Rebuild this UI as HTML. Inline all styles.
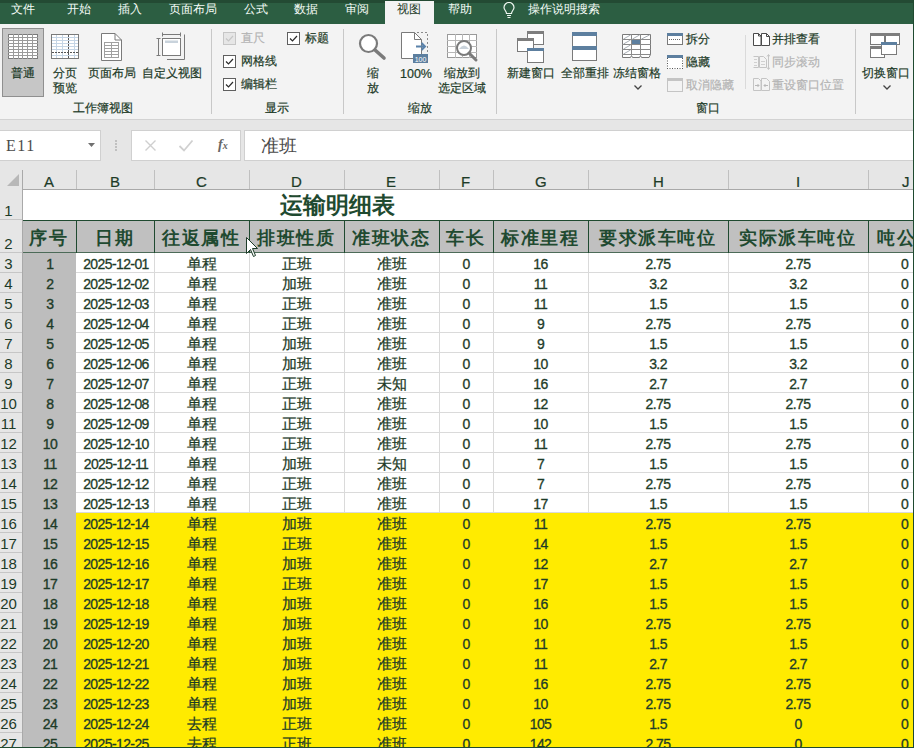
<!DOCTYPE html><html><head><meta charset="utf-8"><style>
*{margin:0;padding:0;box-sizing:border-box}
html,body{width:914px;height:748px;overflow:hidden;background:#f3f3f3;font-family:"Liberation Sans",sans-serif;color:#1d3b28}
.a{position:absolute}
.t{position:absolute;white-space:nowrap;line-height:1}
</style></head><body>

<div class="a" style="left:0;top:0;width:914px;height:24px;background:#2c5e42"></div>
<div class="a" style="left:0;top:0;width:914px;height:3px;background:#234a33"></div>
<div class="a" style="left:385px;top:1px;width:49px;height:24px;background:#f3f3f3"></div>
<div class="t" style="left:11px;top:3px;font-size:12px;color:#f4fbf6">文件</div>
<div class="t" style="left:67px;top:3px;font-size:12px;color:#f4fbf6">开始</div>
<div class="t" style="left:118px;top:3px;font-size:12px;color:#f4fbf6">插入</div>
<div class="t" style="left:169px;top:3px;font-size:12px;color:#f4fbf6">页面布局</div>
<div class="t" style="left:244px;top:3px;font-size:12px;color:#f4fbf6">公式</div>
<div class="t" style="left:294px;top:3px;font-size:12px;color:#f4fbf6">数据</div>
<div class="t" style="left:345px;top:3px;font-size:12px;color:#f4fbf6">审阅</div>
<div class="t" style="left:448px;top:3px;font-size:12px;color:#f4fbf6">帮助</div>
<div class="t" style="left:528px;top:3px;font-size:12px;color:#f4fbf6">操作说明搜索</div>
<div class="t" style="left:397px;top:3px;font-size:12px;color:#1d3b28">视图</div>
<svg class="a" style="left:502px;top:2px" width="14" height="17" viewBox="0 0 14 17"><path d="M4.5 11.5 C4.5 9 2 8 2 5.5 A5 5 0 0 1 12 5.5 C12 8 9.5 9 9.5 11.5 Z" fill="none" stroke="#eef6f0" stroke-width="1.2"/><path d="M5 13.5h4M5.5 15.5h3" stroke="#eef6f0" stroke-width="1.2"/></svg>
<div class="a" style="left:0;top:119px;width:914px;height:1px;background:#d2d2d2"></div>
<div class="a" style="left:913px;top:0;width:1px;height:748px;background:#1f4a30"></div>
<div class="a" style="left:2px;top:28px;width:42px;height:69px;background:#c6c6c6;border:1px solid #8f8f8f"></div>
<svg class="a" style="left:8px;top:34px" width="30" height="25"><rect x="0.5" y="0.5" width="29" height="24" fill="#fff" stroke="#7a7a7a"/><line x1="5.5" y1="0" x2="5.5" y2="25" stroke="#9a9a9a"/><line x1="10.5" y1="0" x2="10.5" y2="25" stroke="#9a9a9a"/><line x1="14.5" y1="0" x2="14.5" y2="25" stroke="#9a9a9a"/><line x1="19.5" y1="0" x2="19.5" y2="25" stroke="#9a9a9a"/><line x1="24.5" y1="0" x2="24.5" y2="25" stroke="#9a9a9a"/><line x1="0" y1="3.5" x2="30" y2="3.5" stroke="#9a9a9a"/><line x1="0" y1="6.5" x2="30" y2="6.5" stroke="#9a9a9a"/><line x1="0" y1="9.5" x2="30" y2="9.5" stroke="#9a9a9a"/><line x1="0" y1="12.5" x2="30" y2="12.5" stroke="#9a9a9a"/><line x1="0" y1="15.5" x2="30" y2="15.5" stroke="#9a9a9a"/><line x1="0" y1="18.5" x2="30" y2="18.5" stroke="#9a9a9a"/><line x1="0" y1="21.5" x2="30" y2="21.5" stroke="#9a9a9a"/></svg>
<div class="t" style="left:11px;top:67px;font-size:12px;-webkit-text-stroke:0.2px;">普通</div>
<svg class="a" style="left:51px;top:34px" width="28" height="25"><rect x="0.5" y="0.5" width="27" height="24" fill="#fff" stroke="#7a7a7a"/><line x1="1" y1="3.5" x2="27" y2="3.5" stroke="#c5d5e5"/><line x1="1" y1="6.5" x2="27" y2="6.5" stroke="#c5d5e5"/><line x1="1" y1="9.5" x2="27" y2="9.5" stroke="#c5d5e5"/><line x1="1" y1="12.5" x2="27" y2="12.5" stroke="#c5d5e5"/><line x1="1" y1="15.5" x2="27" y2="15.5" stroke="#c5d5e5"/><line x1="1" y1="21.5" x2="27" y2="21.5" stroke="#c5d5e5"/><line x1="5.5" y1="1" x2="5.5" y2="24" stroke="#c5d5e5"/><line x1="11.5" y1="1" x2="11.5" y2="24" stroke="#c5d5e5"/><line x1="23.5" y1="1" x2="23.5" y2="24" stroke="#c5d5e5"/><line x1="17.5" y1="1" x2="17.5" y2="24" stroke="#555" stroke-dasharray="2,1"/><line x1="1" y1="18.5" x2="27" y2="18.5" stroke="#555" stroke-dasharray="2,1"/></svg>
<div class="t" style="left:53px;top:67px;font-size:12px;-webkit-text-stroke:0.2px;">分页</div>
<div class="t" style="left:53px;top:82px;font-size:12px;-webkit-text-stroke:0.2px;">预览</div>
<svg class="a" style="left:101px;top:33px" width="22" height="28"><path d="M0.5 0.5H14L20.5 7V27.5H0.5Z" fill="#fff" stroke="#7a7a7a"/><path d="M14 0.5V7H20.5" fill="none" stroke="#7a7a7a"/><rect x="3.5" y="9.5" width="14" height="15" fill="#fff" stroke="#a0a0a0"/><line x1="3" y1="12.5" x2="18" y2="12.5" stroke="#a0a0a0"/><line x1="3" y1="15.5" x2="18" y2="15.5" stroke="#a0a0a0"/><line x1="3" y1="18.5" x2="18" y2="18.5" stroke="#a0a0a0"/><line x1="3" y1="21.5" x2="18" y2="21.5" stroke="#a0a0a0"/><line x1="10.5" y1="9" x2="10.5" y2="25" stroke="#a0a0a0"/></svg>
<div class="t" style="left:88px;top:67px;font-size:12px;-webkit-text-stroke:0.2px;">页面布局</div>
<svg class="a" style="left:155px;top:32px" width="32" height="30"><path d="M3.5 6V24M1.5 6.5H5.5M1.5 23.5H5.5" stroke="#7a7a7a"/><path d="M7 2.5H26M7.5 0.5V4.5M25.5 0.5V4.5" stroke="#7a7a7a"/><path d="M29.5 2.5V27.5H12" fill="none" stroke="#7a7a7a"/><rect x="7.5" y="6.5" width="18" height="17" fill="#fff" stroke="#7a7a7a"/><rect x="10" y="8.5" width="13" height="2.5" fill="#c9d3dc"/></svg>
<div class="t" style="left:142px;top:67px;font-size:12px;-webkit-text-stroke:0.2px;">自定义视图</div>
<div class="t" style="left:73px;top:102px;font-size:12px;-webkit-text-stroke:0.2px;">工作簿视图</div>
<div class="a" style="left:211px;top:29px;width:1px;height:85px;background:#c8c8c8"></div>
<div class="a" style="left:343px;top:29px;width:1px;height:85px;background:#c8c8c8"></div>
<div class="a" style="left:496px;top:29px;width:1px;height:85px;background:#c8c8c8"></div>
<div class="a" style="left:855px;top:29px;width:1px;height:85px;background:#c8c8c8"></div>
<div class="a" style="left:745px;top:35px;width:1px;height:54px;background:#dadada"></div>
<svg class="a" style="left:223px;top:32px" width="13" height="13"><rect x="0.5" y="0.5" width="12" height="12" fill="#e6e6e6" stroke="#c6c6c6"/><path d="M3 6.5L5.5 9L10 4" fill="none" stroke="#c6c6c6" stroke-width="1.2"/></svg>
<div class="t" style="left:241px;top:32px;font-size:12px;color:#b4b4b4;-webkit-text-stroke:0.2px;">直尺</div>
<svg class="a" style="left:287px;top:32px" width="13" height="13"><rect x="0.5" y="0.5" width="12" height="12" fill="#fff" stroke="#5f5f5f"/><path d="M3 6.5L5.5 9L10 4" fill="none" stroke="#2b2b2b" stroke-width="1.2"/></svg>
<div class="t" style="left:305px;top:32px;font-size:12px;-webkit-text-stroke:0.2px;">标题</div>
<svg class="a" style="left:223px;top:55px" width="13" height="13"><rect x="0.5" y="0.5" width="12" height="12" fill="#fff" stroke="#5f5f5f"/><path d="M3 6.5L5.5 9L10 4" fill="none" stroke="#2b2b2b" stroke-width="1.2"/></svg>
<div class="t" style="left:241px;top:55px;font-size:12px;-webkit-text-stroke:0.2px;">网格线</div>
<svg class="a" style="left:223px;top:78px" width="13" height="13"><rect x="0.5" y="0.5" width="12" height="12" fill="#fff" stroke="#5f5f5f"/><path d="M3 6.5L5.5 9L10 4" fill="none" stroke="#2b2b2b" stroke-width="1.2"/></svg>
<div class="t" style="left:241px;top:78px;font-size:12px;-webkit-text-stroke:0.2px;">编辑栏</div>
<div class="t" style="left:265px;top:102px;font-size:12px;-webkit-text-stroke:0.2px;">显示</div>
<svg class="a" style="left:358px;top:33px" width="30" height="28"><circle cx="10.5" cy="10.5" r="8.5" fill="#fff" stroke="#7a7a7a" stroke-width="2.2"/><line x1="17" y1="17" x2="26" y2="25" stroke="#7a7a7a" stroke-width="3.6" stroke-linecap="round"/></svg>
<div class="t" style="left:367px;top:67px;font-size:12px;-webkit-text-stroke:0.2px;">缩</div>
<div class="t" style="left:367px;top:82px;font-size:12px;-webkit-text-stroke:0.2px;">放</div>
<svg class="a" style="left:401px;top:32px" width="28" height="31"><path d="M0.5 0.5H13.5L20.5 7.5V26.5H0.5Z" fill="#fff" stroke="#7a7a7a"/><path d="M13.5 0.5V7.5H20.5" fill="none" stroke="#7a7a7a"/><path d="M16 0.5H26.5V22" fill="none" stroke="#8a8a8a" stroke-dasharray="2,2"/><path d="M15 14.5H24M20.5 11L24 14.5L20.5 18" fill="none" stroke="#5a82aa" stroke-width="2"/><rect x="12" y="22" width="15" height="9" fill="#5d7f9f"/><text x="19.5" y="29.5" font-size="7" fill="#fff" text-anchor="middle" font-family="Liberation Sans">100</text></svg>
<div class="t" style="left:400px;top:68px;font-size:12.5px;-webkit-text-stroke:0.2px;">100%</div>
<svg class="a" style="left:447px;top:34px" width="33" height="29"><rect x="0.5" y="0.5" width="29" height="23" fill="#fff" stroke="#9a9a9a"/><line x1="0" y1="6.5" x2="30" y2="6.5" stroke="#b8b8b8"/><line x1="0" y1="12.5" x2="30" y2="12.5" stroke="#b8b8b8"/><line x1="0" y1="18.5" x2="30" y2="18.5" stroke="#b8b8b8"/><line x1="8.5" y1="0" x2="8.5" y2="24" stroke="#b8b8b8"/><line x1="15.5" y1="0" x2="15.5" y2="24" stroke="#b8b8b8"/><line x1="22.5" y1="0" x2="22.5" y2="24" stroke="#b8b8b8"/><circle cx="17" cy="14" r="7" fill="#fff" stroke="#7a7a7a" stroke-width="2"/><path d="M12 15Q17 8 22 15Z" fill="#c9d2da"/><line x1="22" y1="19" x2="29" y2="26" stroke="#7a7a7a" stroke-width="3" stroke-linecap="round"/></svg>
<div class="t" style="left:444px;top:67px;font-size:12px;-webkit-text-stroke:0.2px;">缩放到</div>
<div class="t" style="left:438px;top:82px;font-size:12px;-webkit-text-stroke:0.2px;">选定区域</div>
<div class="t" style="left:408px;top:102px;font-size:12px;-webkit-text-stroke:0.2px;">缩放</div>
<svg class="a" style="left:517px;top:31px" width="28" height="33"><rect x="10.5" y="0.5" width="16" height="13" fill="#fff" stroke="#7a7a7a"/><rect x="10" y="0" width="17" height="3" fill="#7d7d7d"/><rect x="0.5" y="7.5" width="16" height="13" fill="#fff" stroke="#7a7a7a"/><rect x="0" y="7" width="17" height="3" fill="#7d7d7d"/><rect x="10.5" y="17.5" width="16" height="14" fill="#fff" stroke="#7a7a7a"/><rect x="10" y="17" width="17" height="3" fill="#5d7f9f"/></svg>
<div class="t" style="left:507px;top:67px;font-size:12px;-webkit-text-stroke:0.2px;">新建窗口</div>
<svg class="a" style="left:572px;top:32px" width="25" height="29"><rect x="0.5" y="0.5" width="24" height="28" fill="#fff" stroke="#7a7a7a"/><rect x="0" y="0" width="25" height="4" fill="#5d7f9f"/><rect x="0" y="14" width="25" height="4" fill="#5d7f9f"/></svg>
<div class="t" style="left:561px;top:67px;font-size:12px;-webkit-text-stroke:0.2px;">全部重排</div>
<svg class="a" style="left:622px;top:34px" width="30" height="26"><path d="M0.5 0.5H28.5V20.5L27 23.5H19.5L18.5 21.5L17.5 23.5H10.5L9.5 21.5L8.5 23.5H0.5Z" fill="#fff" stroke="#7a7a7a"/><line x1="0" y1="5.5" x2="29" y2="5.5" stroke="#8a8a8a"/><line x1="0" y1="10.5" x2="29" y2="10.5" stroke="#8a8a8a"/><line x1="0" y1="15.5" x2="29" y2="15.5" stroke="#8a8a8a"/><line x1="0" y1="20.5" x2="29" y2="20.5" stroke="#8a8a8a"/><line x1="9.5" y1="0" x2="9.5" y2="21" stroke="#8a8a8a"/><line x1="18.5" y1="0" x2="18.5" y2="21" stroke="#8a8a8a"/><rect x="10" y="6" width="8" height="4" fill="#5d7f9f"/><path d="M1.5 5L8.5 1M10.5 5L17.5 1M19.5 5L27.5 1M1.5 10L8.5 6M1.5 15L8.5 11M1.5 20L8.5 16" stroke="#a8aeb5"/></svg>
<div class="t" style="left:613px;top:67px;font-size:12px;-webkit-text-stroke:0.2px;">冻结窗格</div>
<svg class="a" style="left:634px;top:85px" width="8" height="5"><path d="M0.5 0.5L4 4L7.5 0.5" fill="none" stroke="#444" stroke-width="1.3"/></svg>
<svg class="a" style="left:667px;top:33px" width="16" height="12"><rect x="0.5" y="0.5" width="15" height="11" fill="#fff" stroke="#7a7a7a"/><rect x="0" y="0" width="16" height="3" fill="#5d7f9f"/><line x1="2" y1="6.5" x2="14" y2="6.5" stroke="#6a6a6a" stroke-dasharray="1,1"/></svg>
<div class="t" style="left:686px;top:33px;font-size:12px;-webkit-text-stroke:0.2px;">拆分</div>
<svg class="a" style="left:667px;top:55px" width="16" height="14"><rect x="0" y="0" width="16" height="14" fill="#fff"/><path d="M0.5 3V14M15.5 3V14M0 13.5H16" stroke="#555" stroke-dasharray="1,1.5"/><rect x="0" y="0" width="16" height="3" fill="#5d7f9f"/></svg>
<div class="t" style="left:686px;top:56px;font-size:12px;-webkit-text-stroke:0.2px;">隐藏</div>
<svg class="a" style="left:667px;top:78px" width="16" height="14"><rect x="0.5" y="0.5" width="15" height="13" fill="#f3f3f3" stroke="#c4c4c4"/><rect x="0" y="0" width="16" height="3" fill="#c4c4c4"/></svg>
<div class="t" style="left:686px;top:79px;font-size:12px;color:#b4b4b4;-webkit-text-stroke:0.2px;">取消隐藏</div>
<div class="t" style="left:696px;top:102px;font-size:12px;-webkit-text-stroke:0.2px;">窗口</div>
<svg class="a" style="left:753px;top:33px" width="17" height="13"><path d="M0.5 0.5H5.5L8 3V12.5H0.5Z" fill="#fff" stroke="#4a4a4a"/><path d="M8.5 0.5H13.5L16.5 3.5V12.5H8.5Z" fill="#fff" stroke="#4a4a4a"/><path d="M5.5 0.5V3H8M13.5 0.5V3.5H16.5" fill="none" stroke="#4a4a4a"/></svg>
<div class="t" style="left:772px;top:33px;font-size:12px;-webkit-text-stroke:0.2px;">并排查看</div>
<svg class="a" style="left:753px;top:54px" width="17" height="16"><path d="M0.5 2.5H5.5V13.5H0.5" fill="none" stroke="#c4c4c4"/><path d="M6.5 2.5H10.5L13.5 5.5V13.5H6.5Z" fill="none" stroke="#c4c4c4"/><path d="M8 7.5H12M8 10.5H12M1 5.5H4M1 8.5H4M1 11.5H4" stroke="#d0d0d0"/><path d="M15.5 1V15M14 2.5L15.5 0.5L17 2.5M14 13.5L15.5 15.5L17 13.5" fill="none" stroke="#c4c4c4"/></svg>
<div class="t" style="left:772px;top:56px;font-size:12px;color:#b4b4b4;-webkit-text-stroke:0.2px;">同步滚动</div>
<svg class="a" style="left:753px;top:78px" width="17" height="13"><path d="M0.5 0.5H5.5L8 3V12.5H0.5Z" fill="none" stroke="#c4c4c4"/><path d="M8.5 0.5H13.5L16.5 3.5V12.5H8.5Z" fill="none" stroke="#c4c4c4"/><path d="M2 7.5H6M4.5 6L6 7.5L4.5 9M11 7.5H15M12.5 6L11 7.5L12.5 9" fill="none" stroke="#b8b8b8"/></svg>
<div class="t" style="left:772px;top:79px;font-size:12px;color:#b4b4b4;-webkit-text-stroke:0.2px;">重设窗口位置</div>
<svg class="a" style="left:870px;top:33px" width="31" height="26"><rect x="0.5" y="0.5" width="14" height="11" fill="#fff" stroke="#7a7a7a"/><rect x="0" y="0" width="15" height="3" fill="#7d7d7d"/><rect x="15.5" y="0.5" width="14" height="11" fill="#fff" stroke="#7a7a7a"/><rect x="15" y="0" width="15" height="3" fill="#7d7d7d"/><rect x="0.5" y="13.5" width="14" height="11" fill="#fff" stroke="#7a7a7a"/><rect x="0" y="13" width="15" height="3" fill="#7d7d7d"/><rect x="11.5" y="9.5" width="15" height="12" fill="#fff" stroke="#7a7a7a"/><rect x="11" y="9" width="16" height="3" fill="#5d7f9f"/></svg>
<div class="t" style="left:862px;top:67px;font-size:12px;-webkit-text-stroke:0.2px;">切换窗口</div>
<svg class="a" style="left:883px;top:85px" width="8" height="5"><path d="M0.5 0.5L4 4L7.5 0.5" fill="none" stroke="#444" stroke-width="1.3"/></svg>
<div class="a" style="left:0;top:120px;width:913px;height:628px;background:#e6e6e6"></div>
<div class="a" style="left:0;top:130px;width:101px;height:31px;background:#fff;border:1px solid #d0d0d0;border-left:none"></div>
<div class="t" style="left:6px;top:138px;font-size:16px;color:#4a4a4a;font-family:'Liberation Serif',serif;letter-spacing:1.5px;">E11</div>
<svg class="a" style="left:88px;top:143px" width="7" height="4"><path d="M0 0H7L3.5 4Z" fill="#707070"/></svg>
<div class="a" style="left:115px;top:140px;width:2px;height:1.5px;background:#c0c0c0"></div>
<div class="a" style="left:115px;top:143px;width:2px;height:1.5px;background:#c0c0c0"></div>
<div class="a" style="left:115px;top:146px;width:2px;height:1.5px;background:#c0c0c0"></div>
<div class="a" style="left:115px;top:149px;width:2px;height:1.5px;background:#c0c0c0"></div>
<div class="a" style="left:131px;top:130px;width:110px;height:31px;background:#fff;border:1px solid #d0d0d0"></div>
<svg class="a" style="left:144px;top:139px" width="13" height="13"><path d="M1.5 1.5L11.5 11.5M11.5 1.5L1.5 11.5" stroke="#cfcfcf" stroke-width="1.4"/></svg>
<svg class="a" style="left:178px;top:139px" width="16" height="13"><path d="M1.5 7L6 11.5L14.5 1.5" fill="none" stroke="#d0d0d0" stroke-width="1.8"/></svg>
<div class="t" style="left:218px;top:138px;font-size:14px;color:#666;font-family:'Liberation Serif',serif;font-weight:bold;"><i>f<span style='font-size:10px'>x</span></i></div>
<div class="a" style="left:244px;top:130px;width:669px;height:31px;background:#fff;border:1px solid #d0d0d0;border-right:none"></div>
<div class="t" style="left:261px;top:137px;font-size:18px;color:#4a4a4a;font-family:'Liberation Serif',serif;">准班</div>
<svg class="a" style="left:7px;top:174px" width="12" height="12"><path d="M12 0V12H0Z" fill="#b8b8b8"/></svg>
<div class="a" style="left:22px;top:170px;width:1px;height:19px;background:#c0c0c0"></div>
<div class="t" style="left:44px;top:174px;font-size:15px;color:#1d3b28;-webkit-text-stroke:0.2px;">A</div>
<div class="a" style="left:76px;top:170px;width:1px;height:19px;background:#c0c0c0"></div>
<div class="t" style="left:110px;top:174px;font-size:15px;color:#1d3b28;-webkit-text-stroke:0.2px;">B</div>
<div class="a" style="left:154px;top:170px;width:1px;height:19px;background:#c0c0c0"></div>
<div class="t" style="left:196px;top:174px;font-size:15px;color:#1d3b28;-webkit-text-stroke:0.2px;">C</div>
<div class="a" style="left:249px;top:170px;width:1px;height:19px;background:#c0c0c0"></div>
<div class="t" style="left:291px;top:174px;font-size:15px;color:#1d3b28;-webkit-text-stroke:0.2px;">D</div>
<div class="a" style="left:344px;top:170px;width:1px;height:19px;background:#c0c0c0"></div>
<div class="t" style="left:386px;top:174px;font-size:15px;color:#1d3b28;-webkit-text-stroke:0.2px;">E</div>
<div class="a" style="left:439px;top:170px;width:1px;height:19px;background:#c0c0c0"></div>
<div class="t" style="left:461px;top:174px;font-size:15px;color:#1d3b28;-webkit-text-stroke:0.2px;">F</div>
<div class="a" style="left:493px;top:170px;width:1px;height:19px;background:#c0c0c0"></div>
<div class="t" style="left:535px;top:174px;font-size:15px;color:#1d3b28;-webkit-text-stroke:0.2px;">G</div>
<div class="a" style="left:588px;top:170px;width:1px;height:19px;background:#c0c0c0"></div>
<div class="t" style="left:653px;top:174px;font-size:15px;color:#1d3b28;-webkit-text-stroke:0.2px;">H</div>
<div class="a" style="left:728px;top:170px;width:1px;height:19px;background:#c0c0c0"></div>
<div class="t" style="left:796px;top:174px;font-size:15px;color:#1d3b28;-webkit-text-stroke:0.2px;">I</div>
<div class="a" style="left:868px;top:170px;width:1px;height:19px;background:#c0c0c0"></div>
<div class="t" style="left:902px;top:174px;font-size:15px;color:#1d3b28;-webkit-text-stroke:0.2px;">J</div>
<div class="a" style="left:0;top:189px;width:913px;height:1px;background:#a9a9a9"></div>
<div class="a" style="left:23px;top:190px;width:890px;height:30px;background:#fff"></div>
<div class="t" style="left:280px;top:194px;font-size:23px;color:#1f4a30;font-weight:bold;">运输明细表</div>
<div class="a" style="left:23px;top:220px;width:890px;height:33px;background:#c0c0c0"></div>
<div class="a" style="left:22px;top:220px;width:891px;height:1px;background:#1f4a30"></div>
<div class="a" style="left:22px;top:252px;width:891px;height:1px;background:#4c6b58"></div>
<div class="t" style="left:29px;top:229px;font-size:18px;letter-spacing:1.5px;font-weight:bold;color:#1f4a30;font-family:'Liberation Serif',serif">序号</div>
<div class="a" style="left:76px;top:220px;width:1px;height:33px;background:#1f4a30"></div>
<div class="t" style="left:95px;top:229px;font-size:18px;letter-spacing:1.5px;font-weight:bold;color:#1f4a30;font-family:'Liberation Serif',serif">日期</div>
<div class="a" style="left:154px;top:220px;width:1px;height:33px;background:#1f4a30"></div>
<div class="t" style="left:162px;top:229px;font-size:18px;letter-spacing:1.5px;font-weight:bold;color:#1f4a30;font-family:'Liberation Serif',serif">往返属性</div>
<div class="a" style="left:249px;top:220px;width:1px;height:33px;background:#1f4a30"></div>
<div class="t" style="left:257px;top:229px;font-size:18px;letter-spacing:1.5px;font-weight:bold;color:#1f4a30;font-family:'Liberation Serif',serif">排班性质</div>
<div class="a" style="left:344px;top:220px;width:1px;height:33px;background:#1f4a30"></div>
<div class="t" style="left:352px;top:229px;font-size:18px;letter-spacing:1.5px;font-weight:bold;color:#1f4a30;font-family:'Liberation Serif',serif">准班状态</div>
<div class="a" style="left:439px;top:220px;width:1px;height:33px;background:#1f4a30"></div>
<div class="t" style="left:446px;top:229px;font-size:18px;letter-spacing:1.5px;font-weight:bold;color:#1f4a30;font-family:'Liberation Serif',serif">车长</div>
<div class="a" style="left:493px;top:220px;width:1px;height:33px;background:#1f4a30"></div>
<div class="t" style="left:501px;top:229px;font-size:18px;letter-spacing:1.5px;font-weight:bold;color:#1f4a30;font-family:'Liberation Serif',serif">标准里程</div>
<div class="a" style="left:588px;top:220px;width:1px;height:33px;background:#1f4a30"></div>
<div class="t" style="left:599px;top:229px;font-size:18px;letter-spacing:1.5px;font-weight:bold;color:#1f4a30;font-family:'Liberation Serif',serif">要求派车吨位</div>
<div class="a" style="left:728px;top:220px;width:1px;height:33px;background:#1f4a30"></div>
<div class="t" style="left:739px;top:229px;font-size:18px;letter-spacing:1.5px;font-weight:bold;color:#1f4a30;font-family:'Liberation Serif',serif">实际派车吨位</div>
<div class="a" style="left:868px;top:220px;width:1px;height:33px;background:#1f4a30"></div>
<div class="t" style="left:877px;top:229px;font-size:18px;letter-spacing:1.5px;font-weight:bold;color:#1f4a30;font-family:'Liberation Serif',serif">吨公</div>
<div class="a" style="left:76px;top:253px;width:837px;height:20px;background:#fff"></div>
<div class="a" style="left:76px;top:272px;width:837px;height:1px;background:#dadada"></div>
<div class="a" style="left:154px;top:253px;width:1px;height:20px;background:#dadada"></div>
<div class="a" style="left:249px;top:253px;width:1px;height:20px;background:#dadada"></div>
<div class="a" style="left:344px;top:253px;width:1px;height:20px;background:#dadada"></div>
<div class="a" style="left:439px;top:253px;width:1px;height:20px;background:#dadada"></div>
<div class="a" style="left:493px;top:253px;width:1px;height:20px;background:#dadada"></div>
<div class="a" style="left:588px;top:253px;width:1px;height:20px;background:#dadada"></div>
<div class="a" style="left:728px;top:253px;width:1px;height:20px;background:#dadada"></div>
<div class="a" style="left:868px;top:253px;width:1px;height:20px;background:#dadada"></div>
<div class="a" style="left:23px;top:253px;width:53px;height:20px;background:#bdbdbd"></div>
<div class="t" style="left:23px;top:257px;width:54px;text-align:center;font-size:14px;letter-spacing:-0.5px;-webkit-text-stroke:0.35px;">1</div>
<div class="t" style="left:77px;top:257px;width:78px;text-align:center;font-size:14px;letter-spacing:-0.6px;-webkit-text-stroke:0.3px;">2025-12-01</div>
<div class="t" style="left:154px;top:256px;width:95px;text-align:center;font-size:15px;-webkit-text-stroke:0.25px;">单程</div>
<div class="t" style="left:249px;top:256px;width:95px;text-align:center;font-size:15px;-webkit-text-stroke:0.25px;">正班</div>
<div class="t" style="left:344px;top:256px;width:95px;text-align:center;font-size:15px;-webkit-text-stroke:0.25px;">准班</div>
<div class="t" style="left:439px;top:257px;width:54px;text-align:center;font-size:14px;letter-spacing:-0.6px;-webkit-text-stroke:0.3px;">0</div>
<div class="t" style="left:493px;top:257px;width:95px;text-align:center;font-size:14px;letter-spacing:-0.6px;-webkit-text-stroke:0.3px;">16</div>
<div class="t" style="left:588px;top:257px;width:140px;text-align:center;font-size:14px;letter-spacing:-0.6px;-webkit-text-stroke:0.3px;">2.75</div>
<div class="t" style="left:728px;top:257px;width:140px;text-align:center;font-size:14px;letter-spacing:-0.6px;-webkit-text-stroke:0.3px;">2.75</div>
<div class="t" style="left:901px;top:257px;font-size:14px;-webkit-text-stroke:0.3px;">0</div>
<div class="a" style="left:76px;top:273px;width:837px;height:20px;background:#fff"></div>
<div class="a" style="left:76px;top:292px;width:837px;height:1px;background:#dadada"></div>
<div class="a" style="left:154px;top:273px;width:1px;height:20px;background:#dadada"></div>
<div class="a" style="left:249px;top:273px;width:1px;height:20px;background:#dadada"></div>
<div class="a" style="left:344px;top:273px;width:1px;height:20px;background:#dadada"></div>
<div class="a" style="left:439px;top:273px;width:1px;height:20px;background:#dadada"></div>
<div class="a" style="left:493px;top:273px;width:1px;height:20px;background:#dadada"></div>
<div class="a" style="left:588px;top:273px;width:1px;height:20px;background:#dadada"></div>
<div class="a" style="left:728px;top:273px;width:1px;height:20px;background:#dadada"></div>
<div class="a" style="left:868px;top:273px;width:1px;height:20px;background:#dadada"></div>
<div class="a" style="left:23px;top:273px;width:53px;height:20px;background:#bdbdbd"></div>
<div class="t" style="left:23px;top:277px;width:54px;text-align:center;font-size:14px;letter-spacing:-0.5px;-webkit-text-stroke:0.35px;">2</div>
<div class="t" style="left:77px;top:277px;width:78px;text-align:center;font-size:14px;letter-spacing:-0.6px;-webkit-text-stroke:0.3px;">2025-12-02</div>
<div class="t" style="left:154px;top:276px;width:95px;text-align:center;font-size:15px;-webkit-text-stroke:0.25px;">单程</div>
<div class="t" style="left:249px;top:276px;width:95px;text-align:center;font-size:15px;-webkit-text-stroke:0.25px;">加班</div>
<div class="t" style="left:344px;top:276px;width:95px;text-align:center;font-size:15px;-webkit-text-stroke:0.25px;">准班</div>
<div class="t" style="left:439px;top:277px;width:54px;text-align:center;font-size:14px;letter-spacing:-0.6px;-webkit-text-stroke:0.3px;">0</div>
<div class="t" style="left:493px;top:277px;width:95px;text-align:center;font-size:14px;letter-spacing:-0.6px;-webkit-text-stroke:0.3px;">11</div>
<div class="t" style="left:588px;top:277px;width:140px;text-align:center;font-size:14px;letter-spacing:-0.6px;-webkit-text-stroke:0.3px;">3.2</div>
<div class="t" style="left:728px;top:277px;width:140px;text-align:center;font-size:14px;letter-spacing:-0.6px;-webkit-text-stroke:0.3px;">3.2</div>
<div class="t" style="left:901px;top:277px;font-size:14px;-webkit-text-stroke:0.3px;">0</div>
<div class="a" style="left:76px;top:293px;width:837px;height:20px;background:#fff"></div>
<div class="a" style="left:76px;top:312px;width:837px;height:1px;background:#dadada"></div>
<div class="a" style="left:154px;top:293px;width:1px;height:20px;background:#dadada"></div>
<div class="a" style="left:249px;top:293px;width:1px;height:20px;background:#dadada"></div>
<div class="a" style="left:344px;top:293px;width:1px;height:20px;background:#dadada"></div>
<div class="a" style="left:439px;top:293px;width:1px;height:20px;background:#dadada"></div>
<div class="a" style="left:493px;top:293px;width:1px;height:20px;background:#dadada"></div>
<div class="a" style="left:588px;top:293px;width:1px;height:20px;background:#dadada"></div>
<div class="a" style="left:728px;top:293px;width:1px;height:20px;background:#dadada"></div>
<div class="a" style="left:868px;top:293px;width:1px;height:20px;background:#dadada"></div>
<div class="a" style="left:23px;top:293px;width:53px;height:20px;background:#bdbdbd"></div>
<div class="t" style="left:23px;top:297px;width:54px;text-align:center;font-size:14px;letter-spacing:-0.5px;-webkit-text-stroke:0.35px;">3</div>
<div class="t" style="left:77px;top:297px;width:78px;text-align:center;font-size:14px;letter-spacing:-0.6px;-webkit-text-stroke:0.3px;">2025-12-03</div>
<div class="t" style="left:154px;top:296px;width:95px;text-align:center;font-size:15px;-webkit-text-stroke:0.25px;">单程</div>
<div class="t" style="left:249px;top:296px;width:95px;text-align:center;font-size:15px;-webkit-text-stroke:0.25px;">正班</div>
<div class="t" style="left:344px;top:296px;width:95px;text-align:center;font-size:15px;-webkit-text-stroke:0.25px;">准班</div>
<div class="t" style="left:439px;top:297px;width:54px;text-align:center;font-size:14px;letter-spacing:-0.6px;-webkit-text-stroke:0.3px;">0</div>
<div class="t" style="left:493px;top:297px;width:95px;text-align:center;font-size:14px;letter-spacing:-0.6px;-webkit-text-stroke:0.3px;">11</div>
<div class="t" style="left:588px;top:297px;width:140px;text-align:center;font-size:14px;letter-spacing:-0.6px;-webkit-text-stroke:0.3px;">1.5</div>
<div class="t" style="left:728px;top:297px;width:140px;text-align:center;font-size:14px;letter-spacing:-0.6px;-webkit-text-stroke:0.3px;">1.5</div>
<div class="t" style="left:901px;top:297px;font-size:14px;-webkit-text-stroke:0.3px;">0</div>
<div class="a" style="left:76px;top:313px;width:837px;height:20px;background:#fff"></div>
<div class="a" style="left:76px;top:332px;width:837px;height:1px;background:#dadada"></div>
<div class="a" style="left:154px;top:313px;width:1px;height:20px;background:#dadada"></div>
<div class="a" style="left:249px;top:313px;width:1px;height:20px;background:#dadada"></div>
<div class="a" style="left:344px;top:313px;width:1px;height:20px;background:#dadada"></div>
<div class="a" style="left:439px;top:313px;width:1px;height:20px;background:#dadada"></div>
<div class="a" style="left:493px;top:313px;width:1px;height:20px;background:#dadada"></div>
<div class="a" style="left:588px;top:313px;width:1px;height:20px;background:#dadada"></div>
<div class="a" style="left:728px;top:313px;width:1px;height:20px;background:#dadada"></div>
<div class="a" style="left:868px;top:313px;width:1px;height:20px;background:#dadada"></div>
<div class="a" style="left:23px;top:313px;width:53px;height:20px;background:#bdbdbd"></div>
<div class="t" style="left:23px;top:317px;width:54px;text-align:center;font-size:14px;letter-spacing:-0.5px;-webkit-text-stroke:0.35px;">4</div>
<div class="t" style="left:77px;top:317px;width:78px;text-align:center;font-size:14px;letter-spacing:-0.6px;-webkit-text-stroke:0.3px;">2025-12-04</div>
<div class="t" style="left:154px;top:316px;width:95px;text-align:center;font-size:15px;-webkit-text-stroke:0.25px;">单程</div>
<div class="t" style="left:249px;top:316px;width:95px;text-align:center;font-size:15px;-webkit-text-stroke:0.25px;">正班</div>
<div class="t" style="left:344px;top:316px;width:95px;text-align:center;font-size:15px;-webkit-text-stroke:0.25px;">准班</div>
<div class="t" style="left:439px;top:317px;width:54px;text-align:center;font-size:14px;letter-spacing:-0.6px;-webkit-text-stroke:0.3px;">0</div>
<div class="t" style="left:493px;top:317px;width:95px;text-align:center;font-size:14px;letter-spacing:-0.6px;-webkit-text-stroke:0.3px;">9</div>
<div class="t" style="left:588px;top:317px;width:140px;text-align:center;font-size:14px;letter-spacing:-0.6px;-webkit-text-stroke:0.3px;">2.75</div>
<div class="t" style="left:728px;top:317px;width:140px;text-align:center;font-size:14px;letter-spacing:-0.6px;-webkit-text-stroke:0.3px;">2.75</div>
<div class="t" style="left:901px;top:317px;font-size:14px;-webkit-text-stroke:0.3px;">0</div>
<div class="a" style="left:76px;top:333px;width:837px;height:20px;background:#fff"></div>
<div class="a" style="left:76px;top:352px;width:837px;height:1px;background:#dadada"></div>
<div class="a" style="left:154px;top:333px;width:1px;height:20px;background:#dadada"></div>
<div class="a" style="left:249px;top:333px;width:1px;height:20px;background:#dadada"></div>
<div class="a" style="left:344px;top:333px;width:1px;height:20px;background:#dadada"></div>
<div class="a" style="left:439px;top:333px;width:1px;height:20px;background:#dadada"></div>
<div class="a" style="left:493px;top:333px;width:1px;height:20px;background:#dadada"></div>
<div class="a" style="left:588px;top:333px;width:1px;height:20px;background:#dadada"></div>
<div class="a" style="left:728px;top:333px;width:1px;height:20px;background:#dadada"></div>
<div class="a" style="left:868px;top:333px;width:1px;height:20px;background:#dadada"></div>
<div class="a" style="left:23px;top:333px;width:53px;height:20px;background:#bdbdbd"></div>
<div class="t" style="left:23px;top:337px;width:54px;text-align:center;font-size:14px;letter-spacing:-0.5px;-webkit-text-stroke:0.35px;">5</div>
<div class="t" style="left:77px;top:337px;width:78px;text-align:center;font-size:14px;letter-spacing:-0.6px;-webkit-text-stroke:0.3px;">2025-12-05</div>
<div class="t" style="left:154px;top:336px;width:95px;text-align:center;font-size:15px;-webkit-text-stroke:0.25px;">单程</div>
<div class="t" style="left:249px;top:336px;width:95px;text-align:center;font-size:15px;-webkit-text-stroke:0.25px;">加班</div>
<div class="t" style="left:344px;top:336px;width:95px;text-align:center;font-size:15px;-webkit-text-stroke:0.25px;">准班</div>
<div class="t" style="left:439px;top:337px;width:54px;text-align:center;font-size:14px;letter-spacing:-0.6px;-webkit-text-stroke:0.3px;">0</div>
<div class="t" style="left:493px;top:337px;width:95px;text-align:center;font-size:14px;letter-spacing:-0.6px;-webkit-text-stroke:0.3px;">9</div>
<div class="t" style="left:588px;top:337px;width:140px;text-align:center;font-size:14px;letter-spacing:-0.6px;-webkit-text-stroke:0.3px;">1.5</div>
<div class="t" style="left:728px;top:337px;width:140px;text-align:center;font-size:14px;letter-spacing:-0.6px;-webkit-text-stroke:0.3px;">1.5</div>
<div class="t" style="left:901px;top:337px;font-size:14px;-webkit-text-stroke:0.3px;">0</div>
<div class="a" style="left:76px;top:353px;width:837px;height:20px;background:#fff"></div>
<div class="a" style="left:76px;top:372px;width:837px;height:1px;background:#dadada"></div>
<div class="a" style="left:154px;top:353px;width:1px;height:20px;background:#dadada"></div>
<div class="a" style="left:249px;top:353px;width:1px;height:20px;background:#dadada"></div>
<div class="a" style="left:344px;top:353px;width:1px;height:20px;background:#dadada"></div>
<div class="a" style="left:439px;top:353px;width:1px;height:20px;background:#dadada"></div>
<div class="a" style="left:493px;top:353px;width:1px;height:20px;background:#dadada"></div>
<div class="a" style="left:588px;top:353px;width:1px;height:20px;background:#dadada"></div>
<div class="a" style="left:728px;top:353px;width:1px;height:20px;background:#dadada"></div>
<div class="a" style="left:868px;top:353px;width:1px;height:20px;background:#dadada"></div>
<div class="a" style="left:23px;top:353px;width:53px;height:20px;background:#bdbdbd"></div>
<div class="t" style="left:23px;top:357px;width:54px;text-align:center;font-size:14px;letter-spacing:-0.5px;-webkit-text-stroke:0.35px;">6</div>
<div class="t" style="left:77px;top:357px;width:78px;text-align:center;font-size:14px;letter-spacing:-0.6px;-webkit-text-stroke:0.3px;">2025-12-06</div>
<div class="t" style="left:154px;top:356px;width:95px;text-align:center;font-size:15px;-webkit-text-stroke:0.25px;">单程</div>
<div class="t" style="left:249px;top:356px;width:95px;text-align:center;font-size:15px;-webkit-text-stroke:0.25px;">加班</div>
<div class="t" style="left:344px;top:356px;width:95px;text-align:center;font-size:15px;-webkit-text-stroke:0.25px;">准班</div>
<div class="t" style="left:439px;top:357px;width:54px;text-align:center;font-size:14px;letter-spacing:-0.6px;-webkit-text-stroke:0.3px;">0</div>
<div class="t" style="left:493px;top:357px;width:95px;text-align:center;font-size:14px;letter-spacing:-0.6px;-webkit-text-stroke:0.3px;">10</div>
<div class="t" style="left:588px;top:357px;width:140px;text-align:center;font-size:14px;letter-spacing:-0.6px;-webkit-text-stroke:0.3px;">3.2</div>
<div class="t" style="left:728px;top:357px;width:140px;text-align:center;font-size:14px;letter-spacing:-0.6px;-webkit-text-stroke:0.3px;">3.2</div>
<div class="t" style="left:901px;top:357px;font-size:14px;-webkit-text-stroke:0.3px;">0</div>
<div class="a" style="left:76px;top:373px;width:837px;height:20px;background:#fff"></div>
<div class="a" style="left:76px;top:392px;width:837px;height:1px;background:#dadada"></div>
<div class="a" style="left:154px;top:373px;width:1px;height:20px;background:#dadada"></div>
<div class="a" style="left:249px;top:373px;width:1px;height:20px;background:#dadada"></div>
<div class="a" style="left:344px;top:373px;width:1px;height:20px;background:#dadada"></div>
<div class="a" style="left:439px;top:373px;width:1px;height:20px;background:#dadada"></div>
<div class="a" style="left:493px;top:373px;width:1px;height:20px;background:#dadada"></div>
<div class="a" style="left:588px;top:373px;width:1px;height:20px;background:#dadada"></div>
<div class="a" style="left:728px;top:373px;width:1px;height:20px;background:#dadada"></div>
<div class="a" style="left:868px;top:373px;width:1px;height:20px;background:#dadada"></div>
<div class="a" style="left:23px;top:373px;width:53px;height:20px;background:#bdbdbd"></div>
<div class="t" style="left:23px;top:377px;width:54px;text-align:center;font-size:14px;letter-spacing:-0.5px;-webkit-text-stroke:0.35px;">7</div>
<div class="t" style="left:77px;top:377px;width:78px;text-align:center;font-size:14px;letter-spacing:-0.6px;-webkit-text-stroke:0.3px;">2025-12-07</div>
<div class="t" style="left:154px;top:376px;width:95px;text-align:center;font-size:15px;-webkit-text-stroke:0.25px;">单程</div>
<div class="t" style="left:249px;top:376px;width:95px;text-align:center;font-size:15px;-webkit-text-stroke:0.25px;">正班</div>
<div class="t" style="left:344px;top:376px;width:95px;text-align:center;font-size:15px;-webkit-text-stroke:0.25px;">未知</div>
<div class="t" style="left:439px;top:377px;width:54px;text-align:center;font-size:14px;letter-spacing:-0.6px;-webkit-text-stroke:0.3px;">0</div>
<div class="t" style="left:493px;top:377px;width:95px;text-align:center;font-size:14px;letter-spacing:-0.6px;-webkit-text-stroke:0.3px;">16</div>
<div class="t" style="left:588px;top:377px;width:140px;text-align:center;font-size:14px;letter-spacing:-0.6px;-webkit-text-stroke:0.3px;">2.7</div>
<div class="t" style="left:728px;top:377px;width:140px;text-align:center;font-size:14px;letter-spacing:-0.6px;-webkit-text-stroke:0.3px;">2.7</div>
<div class="t" style="left:901px;top:377px;font-size:14px;-webkit-text-stroke:0.3px;">0</div>
<div class="a" style="left:76px;top:393px;width:837px;height:20px;background:#fff"></div>
<div class="a" style="left:76px;top:412px;width:837px;height:1px;background:#dadada"></div>
<div class="a" style="left:154px;top:393px;width:1px;height:20px;background:#dadada"></div>
<div class="a" style="left:249px;top:393px;width:1px;height:20px;background:#dadada"></div>
<div class="a" style="left:344px;top:393px;width:1px;height:20px;background:#dadada"></div>
<div class="a" style="left:439px;top:393px;width:1px;height:20px;background:#dadada"></div>
<div class="a" style="left:493px;top:393px;width:1px;height:20px;background:#dadada"></div>
<div class="a" style="left:588px;top:393px;width:1px;height:20px;background:#dadada"></div>
<div class="a" style="left:728px;top:393px;width:1px;height:20px;background:#dadada"></div>
<div class="a" style="left:868px;top:393px;width:1px;height:20px;background:#dadada"></div>
<div class="a" style="left:23px;top:393px;width:53px;height:20px;background:#bdbdbd"></div>
<div class="t" style="left:23px;top:397px;width:54px;text-align:center;font-size:14px;letter-spacing:-0.5px;-webkit-text-stroke:0.35px;">8</div>
<div class="t" style="left:77px;top:397px;width:78px;text-align:center;font-size:14px;letter-spacing:-0.6px;-webkit-text-stroke:0.3px;">2025-12-08</div>
<div class="t" style="left:154px;top:396px;width:95px;text-align:center;font-size:15px;-webkit-text-stroke:0.25px;">单程</div>
<div class="t" style="left:249px;top:396px;width:95px;text-align:center;font-size:15px;-webkit-text-stroke:0.25px;">正班</div>
<div class="t" style="left:344px;top:396px;width:95px;text-align:center;font-size:15px;-webkit-text-stroke:0.25px;">准班</div>
<div class="t" style="left:439px;top:397px;width:54px;text-align:center;font-size:14px;letter-spacing:-0.6px;-webkit-text-stroke:0.3px;">0</div>
<div class="t" style="left:493px;top:397px;width:95px;text-align:center;font-size:14px;letter-spacing:-0.6px;-webkit-text-stroke:0.3px;">12</div>
<div class="t" style="left:588px;top:397px;width:140px;text-align:center;font-size:14px;letter-spacing:-0.6px;-webkit-text-stroke:0.3px;">2.75</div>
<div class="t" style="left:728px;top:397px;width:140px;text-align:center;font-size:14px;letter-spacing:-0.6px;-webkit-text-stroke:0.3px;">2.75</div>
<div class="t" style="left:901px;top:397px;font-size:14px;-webkit-text-stroke:0.3px;">0</div>
<div class="a" style="left:76px;top:413px;width:837px;height:20px;background:#fff"></div>
<div class="a" style="left:76px;top:432px;width:837px;height:1px;background:#dadada"></div>
<div class="a" style="left:154px;top:413px;width:1px;height:20px;background:#dadada"></div>
<div class="a" style="left:249px;top:413px;width:1px;height:20px;background:#dadada"></div>
<div class="a" style="left:344px;top:413px;width:1px;height:20px;background:#dadada"></div>
<div class="a" style="left:439px;top:413px;width:1px;height:20px;background:#dadada"></div>
<div class="a" style="left:493px;top:413px;width:1px;height:20px;background:#dadada"></div>
<div class="a" style="left:588px;top:413px;width:1px;height:20px;background:#dadada"></div>
<div class="a" style="left:728px;top:413px;width:1px;height:20px;background:#dadada"></div>
<div class="a" style="left:868px;top:413px;width:1px;height:20px;background:#dadada"></div>
<div class="a" style="left:23px;top:413px;width:53px;height:20px;background:#bdbdbd"></div>
<div class="t" style="left:23px;top:417px;width:54px;text-align:center;font-size:14px;letter-spacing:-0.5px;-webkit-text-stroke:0.35px;">9</div>
<div class="t" style="left:77px;top:417px;width:78px;text-align:center;font-size:14px;letter-spacing:-0.6px;-webkit-text-stroke:0.3px;">2025-12-09</div>
<div class="t" style="left:154px;top:416px;width:95px;text-align:center;font-size:15px;-webkit-text-stroke:0.25px;">单程</div>
<div class="t" style="left:249px;top:416px;width:95px;text-align:center;font-size:15px;-webkit-text-stroke:0.25px;">正班</div>
<div class="t" style="left:344px;top:416px;width:95px;text-align:center;font-size:15px;-webkit-text-stroke:0.25px;">准班</div>
<div class="t" style="left:439px;top:417px;width:54px;text-align:center;font-size:14px;letter-spacing:-0.6px;-webkit-text-stroke:0.3px;">0</div>
<div class="t" style="left:493px;top:417px;width:95px;text-align:center;font-size:14px;letter-spacing:-0.6px;-webkit-text-stroke:0.3px;">10</div>
<div class="t" style="left:588px;top:417px;width:140px;text-align:center;font-size:14px;letter-spacing:-0.6px;-webkit-text-stroke:0.3px;">1.5</div>
<div class="t" style="left:728px;top:417px;width:140px;text-align:center;font-size:14px;letter-spacing:-0.6px;-webkit-text-stroke:0.3px;">1.5</div>
<div class="t" style="left:901px;top:417px;font-size:14px;-webkit-text-stroke:0.3px;">0</div>
<div class="a" style="left:76px;top:433px;width:837px;height:20px;background:#fff"></div>
<div class="a" style="left:76px;top:452px;width:837px;height:1px;background:#dadada"></div>
<div class="a" style="left:154px;top:433px;width:1px;height:20px;background:#dadada"></div>
<div class="a" style="left:249px;top:433px;width:1px;height:20px;background:#dadada"></div>
<div class="a" style="left:344px;top:433px;width:1px;height:20px;background:#dadada"></div>
<div class="a" style="left:439px;top:433px;width:1px;height:20px;background:#dadada"></div>
<div class="a" style="left:493px;top:433px;width:1px;height:20px;background:#dadada"></div>
<div class="a" style="left:588px;top:433px;width:1px;height:20px;background:#dadada"></div>
<div class="a" style="left:728px;top:433px;width:1px;height:20px;background:#dadada"></div>
<div class="a" style="left:868px;top:433px;width:1px;height:20px;background:#dadada"></div>
<div class="a" style="left:23px;top:433px;width:53px;height:20px;background:#bdbdbd"></div>
<div class="t" style="left:23px;top:437px;width:54px;text-align:center;font-size:14px;letter-spacing:-0.5px;-webkit-text-stroke:0.35px;">10</div>
<div class="t" style="left:77px;top:437px;width:78px;text-align:center;font-size:14px;letter-spacing:-0.6px;-webkit-text-stroke:0.3px;">2025-12-10</div>
<div class="t" style="left:154px;top:436px;width:95px;text-align:center;font-size:15px;-webkit-text-stroke:0.25px;">单程</div>
<div class="t" style="left:249px;top:436px;width:95px;text-align:center;font-size:15px;-webkit-text-stroke:0.25px;">正班</div>
<div class="t" style="left:344px;top:436px;width:95px;text-align:center;font-size:15px;-webkit-text-stroke:0.25px;">准班</div>
<div class="t" style="left:439px;top:437px;width:54px;text-align:center;font-size:14px;letter-spacing:-0.6px;-webkit-text-stroke:0.3px;">0</div>
<div class="t" style="left:493px;top:437px;width:95px;text-align:center;font-size:14px;letter-spacing:-0.6px;-webkit-text-stroke:0.3px;">11</div>
<div class="t" style="left:588px;top:437px;width:140px;text-align:center;font-size:14px;letter-spacing:-0.6px;-webkit-text-stroke:0.3px;">2.75</div>
<div class="t" style="left:728px;top:437px;width:140px;text-align:center;font-size:14px;letter-spacing:-0.6px;-webkit-text-stroke:0.3px;">2.75</div>
<div class="t" style="left:901px;top:437px;font-size:14px;-webkit-text-stroke:0.3px;">0</div>
<div class="a" style="left:76px;top:453px;width:837px;height:20px;background:#fff"></div>
<div class="a" style="left:76px;top:472px;width:837px;height:1px;background:#dadada"></div>
<div class="a" style="left:154px;top:453px;width:1px;height:20px;background:#dadada"></div>
<div class="a" style="left:249px;top:453px;width:1px;height:20px;background:#dadada"></div>
<div class="a" style="left:344px;top:453px;width:1px;height:20px;background:#dadada"></div>
<div class="a" style="left:439px;top:453px;width:1px;height:20px;background:#dadada"></div>
<div class="a" style="left:493px;top:453px;width:1px;height:20px;background:#dadada"></div>
<div class="a" style="left:588px;top:453px;width:1px;height:20px;background:#dadada"></div>
<div class="a" style="left:728px;top:453px;width:1px;height:20px;background:#dadada"></div>
<div class="a" style="left:868px;top:453px;width:1px;height:20px;background:#dadada"></div>
<div class="a" style="left:23px;top:453px;width:53px;height:20px;background:#bdbdbd"></div>
<div class="t" style="left:23px;top:457px;width:54px;text-align:center;font-size:14px;letter-spacing:-0.5px;-webkit-text-stroke:0.35px;">11</div>
<div class="t" style="left:77px;top:457px;width:78px;text-align:center;font-size:14px;letter-spacing:-0.6px;-webkit-text-stroke:0.3px;">2025-12-11</div>
<div class="t" style="left:154px;top:456px;width:95px;text-align:center;font-size:15px;-webkit-text-stroke:0.25px;">单程</div>
<div class="t" style="left:249px;top:456px;width:95px;text-align:center;font-size:15px;-webkit-text-stroke:0.25px;">加班</div>
<div class="t" style="left:344px;top:456px;width:95px;text-align:center;font-size:15px;-webkit-text-stroke:0.25px;">未知</div>
<div class="t" style="left:439px;top:457px;width:54px;text-align:center;font-size:14px;letter-spacing:-0.6px;-webkit-text-stroke:0.3px;">0</div>
<div class="t" style="left:493px;top:457px;width:95px;text-align:center;font-size:14px;letter-spacing:-0.6px;-webkit-text-stroke:0.3px;">7</div>
<div class="t" style="left:588px;top:457px;width:140px;text-align:center;font-size:14px;letter-spacing:-0.6px;-webkit-text-stroke:0.3px;">1.5</div>
<div class="t" style="left:728px;top:457px;width:140px;text-align:center;font-size:14px;letter-spacing:-0.6px;-webkit-text-stroke:0.3px;">1.5</div>
<div class="t" style="left:901px;top:457px;font-size:14px;-webkit-text-stroke:0.3px;">0</div>
<div class="a" style="left:76px;top:473px;width:837px;height:20px;background:#fff"></div>
<div class="a" style="left:76px;top:492px;width:837px;height:1px;background:#dadada"></div>
<div class="a" style="left:154px;top:473px;width:1px;height:20px;background:#dadada"></div>
<div class="a" style="left:249px;top:473px;width:1px;height:20px;background:#dadada"></div>
<div class="a" style="left:344px;top:473px;width:1px;height:20px;background:#dadada"></div>
<div class="a" style="left:439px;top:473px;width:1px;height:20px;background:#dadada"></div>
<div class="a" style="left:493px;top:473px;width:1px;height:20px;background:#dadada"></div>
<div class="a" style="left:588px;top:473px;width:1px;height:20px;background:#dadada"></div>
<div class="a" style="left:728px;top:473px;width:1px;height:20px;background:#dadada"></div>
<div class="a" style="left:868px;top:473px;width:1px;height:20px;background:#dadada"></div>
<div class="a" style="left:23px;top:473px;width:53px;height:20px;background:#bdbdbd"></div>
<div class="t" style="left:23px;top:477px;width:54px;text-align:center;font-size:14px;letter-spacing:-0.5px;-webkit-text-stroke:0.35px;">12</div>
<div class="t" style="left:77px;top:477px;width:78px;text-align:center;font-size:14px;letter-spacing:-0.6px;-webkit-text-stroke:0.3px;">2025-12-12</div>
<div class="t" style="left:154px;top:476px;width:95px;text-align:center;font-size:15px;-webkit-text-stroke:0.25px;">单程</div>
<div class="t" style="left:249px;top:476px;width:95px;text-align:center;font-size:15px;-webkit-text-stroke:0.25px;">正班</div>
<div class="t" style="left:344px;top:476px;width:95px;text-align:center;font-size:15px;-webkit-text-stroke:0.25px;">准班</div>
<div class="t" style="left:439px;top:477px;width:54px;text-align:center;font-size:14px;letter-spacing:-0.6px;-webkit-text-stroke:0.3px;">0</div>
<div class="t" style="left:493px;top:477px;width:95px;text-align:center;font-size:14px;letter-spacing:-0.6px;-webkit-text-stroke:0.3px;">7</div>
<div class="t" style="left:588px;top:477px;width:140px;text-align:center;font-size:14px;letter-spacing:-0.6px;-webkit-text-stroke:0.3px;">2.75</div>
<div class="t" style="left:728px;top:477px;width:140px;text-align:center;font-size:14px;letter-spacing:-0.6px;-webkit-text-stroke:0.3px;">2.75</div>
<div class="t" style="left:901px;top:477px;font-size:14px;-webkit-text-stroke:0.3px;">0</div>
<div class="a" style="left:76px;top:493px;width:837px;height:20px;background:#fff"></div>
<div class="a" style="left:76px;top:512px;width:837px;height:1px;background:#dadada"></div>
<div class="a" style="left:154px;top:493px;width:1px;height:20px;background:#dadada"></div>
<div class="a" style="left:249px;top:493px;width:1px;height:20px;background:#dadada"></div>
<div class="a" style="left:344px;top:493px;width:1px;height:20px;background:#dadada"></div>
<div class="a" style="left:439px;top:493px;width:1px;height:20px;background:#dadada"></div>
<div class="a" style="left:493px;top:493px;width:1px;height:20px;background:#dadada"></div>
<div class="a" style="left:588px;top:493px;width:1px;height:20px;background:#dadada"></div>
<div class="a" style="left:728px;top:493px;width:1px;height:20px;background:#dadada"></div>
<div class="a" style="left:868px;top:493px;width:1px;height:20px;background:#dadada"></div>
<div class="a" style="left:23px;top:493px;width:53px;height:20px;background:#bdbdbd"></div>
<div class="t" style="left:23px;top:497px;width:54px;text-align:center;font-size:14px;letter-spacing:-0.5px;-webkit-text-stroke:0.35px;">13</div>
<div class="t" style="left:77px;top:497px;width:78px;text-align:center;font-size:14px;letter-spacing:-0.6px;-webkit-text-stroke:0.3px;">2025-12-13</div>
<div class="t" style="left:154px;top:496px;width:95px;text-align:center;font-size:15px;-webkit-text-stroke:0.25px;">单程</div>
<div class="t" style="left:249px;top:496px;width:95px;text-align:center;font-size:15px;-webkit-text-stroke:0.25px;">正班</div>
<div class="t" style="left:344px;top:496px;width:95px;text-align:center;font-size:15px;-webkit-text-stroke:0.25px;">准班</div>
<div class="t" style="left:439px;top:497px;width:54px;text-align:center;font-size:14px;letter-spacing:-0.6px;-webkit-text-stroke:0.3px;">0</div>
<div class="t" style="left:493px;top:497px;width:95px;text-align:center;font-size:14px;letter-spacing:-0.6px;-webkit-text-stroke:0.3px;">17</div>
<div class="t" style="left:588px;top:497px;width:140px;text-align:center;font-size:14px;letter-spacing:-0.6px;-webkit-text-stroke:0.3px;">1.5</div>
<div class="t" style="left:728px;top:497px;width:140px;text-align:center;font-size:14px;letter-spacing:-0.6px;-webkit-text-stroke:0.3px;">1.5</div>
<div class="t" style="left:901px;top:497px;font-size:14px;-webkit-text-stroke:0.3px;">0</div>
<div class="a" style="left:76px;top:513px;width:837px;height:20px;background:#ffeb00"></div>
<div class="a" style="left:23px;top:513px;width:53px;height:20px;background:#bdbdbd"></div>
<div class="t" style="left:23px;top:517px;width:54px;text-align:center;font-size:14px;letter-spacing:-0.5px;-webkit-text-stroke:0.35px;">14</div>
<div class="t" style="left:77px;top:517px;width:78px;text-align:center;font-size:14px;letter-spacing:-0.6px;-webkit-text-stroke:0.3px;">2025-12-14</div>
<div class="t" style="left:154px;top:516px;width:95px;text-align:center;font-size:15px;-webkit-text-stroke:0.25px;">单程</div>
<div class="t" style="left:249px;top:516px;width:95px;text-align:center;font-size:15px;-webkit-text-stroke:0.25px;">加班</div>
<div class="t" style="left:344px;top:516px;width:95px;text-align:center;font-size:15px;-webkit-text-stroke:0.25px;">准班</div>
<div class="t" style="left:439px;top:517px;width:54px;text-align:center;font-size:14px;letter-spacing:-0.6px;-webkit-text-stroke:0.3px;">0</div>
<div class="t" style="left:493px;top:517px;width:95px;text-align:center;font-size:14px;letter-spacing:-0.6px;-webkit-text-stroke:0.3px;">11</div>
<div class="t" style="left:588px;top:517px;width:140px;text-align:center;font-size:14px;letter-spacing:-0.6px;-webkit-text-stroke:0.3px;">2.75</div>
<div class="t" style="left:728px;top:517px;width:140px;text-align:center;font-size:14px;letter-spacing:-0.6px;-webkit-text-stroke:0.3px;">2.75</div>
<div class="t" style="left:901px;top:517px;font-size:14px;-webkit-text-stroke:0.3px;">0</div>
<div class="a" style="left:76px;top:533px;width:837px;height:20px;background:#ffeb00"></div>
<div class="a" style="left:23px;top:533px;width:53px;height:20px;background:#bdbdbd"></div>
<div class="t" style="left:23px;top:537px;width:54px;text-align:center;font-size:14px;letter-spacing:-0.5px;-webkit-text-stroke:0.35px;">15</div>
<div class="t" style="left:77px;top:537px;width:78px;text-align:center;font-size:14px;letter-spacing:-0.6px;-webkit-text-stroke:0.3px;">2025-12-15</div>
<div class="t" style="left:154px;top:536px;width:95px;text-align:center;font-size:15px;-webkit-text-stroke:0.25px;">单程</div>
<div class="t" style="left:249px;top:536px;width:95px;text-align:center;font-size:15px;-webkit-text-stroke:0.25px;">正班</div>
<div class="t" style="left:344px;top:536px;width:95px;text-align:center;font-size:15px;-webkit-text-stroke:0.25px;">准班</div>
<div class="t" style="left:439px;top:537px;width:54px;text-align:center;font-size:14px;letter-spacing:-0.6px;-webkit-text-stroke:0.3px;">0</div>
<div class="t" style="left:493px;top:537px;width:95px;text-align:center;font-size:14px;letter-spacing:-0.6px;-webkit-text-stroke:0.3px;">14</div>
<div class="t" style="left:588px;top:537px;width:140px;text-align:center;font-size:14px;letter-spacing:-0.6px;-webkit-text-stroke:0.3px;">1.5</div>
<div class="t" style="left:728px;top:537px;width:140px;text-align:center;font-size:14px;letter-spacing:-0.6px;-webkit-text-stroke:0.3px;">1.5</div>
<div class="t" style="left:901px;top:537px;font-size:14px;-webkit-text-stroke:0.3px;">0</div>
<div class="a" style="left:76px;top:553px;width:837px;height:20px;background:#ffeb00"></div>
<div class="a" style="left:23px;top:553px;width:53px;height:20px;background:#bdbdbd"></div>
<div class="t" style="left:23px;top:557px;width:54px;text-align:center;font-size:14px;letter-spacing:-0.5px;-webkit-text-stroke:0.35px;">16</div>
<div class="t" style="left:77px;top:557px;width:78px;text-align:center;font-size:14px;letter-spacing:-0.6px;-webkit-text-stroke:0.3px;">2025-12-16</div>
<div class="t" style="left:154px;top:556px;width:95px;text-align:center;font-size:15px;-webkit-text-stroke:0.25px;">单程</div>
<div class="t" style="left:249px;top:556px;width:95px;text-align:center;font-size:15px;-webkit-text-stroke:0.25px;">加班</div>
<div class="t" style="left:344px;top:556px;width:95px;text-align:center;font-size:15px;-webkit-text-stroke:0.25px;">准班</div>
<div class="t" style="left:439px;top:557px;width:54px;text-align:center;font-size:14px;letter-spacing:-0.6px;-webkit-text-stroke:0.3px;">0</div>
<div class="t" style="left:493px;top:557px;width:95px;text-align:center;font-size:14px;letter-spacing:-0.6px;-webkit-text-stroke:0.3px;">12</div>
<div class="t" style="left:588px;top:557px;width:140px;text-align:center;font-size:14px;letter-spacing:-0.6px;-webkit-text-stroke:0.3px;">2.7</div>
<div class="t" style="left:728px;top:557px;width:140px;text-align:center;font-size:14px;letter-spacing:-0.6px;-webkit-text-stroke:0.3px;">2.7</div>
<div class="t" style="left:901px;top:557px;font-size:14px;-webkit-text-stroke:0.3px;">0</div>
<div class="a" style="left:76px;top:573px;width:837px;height:20px;background:#ffeb00"></div>
<div class="a" style="left:23px;top:573px;width:53px;height:20px;background:#bdbdbd"></div>
<div class="t" style="left:23px;top:577px;width:54px;text-align:center;font-size:14px;letter-spacing:-0.5px;-webkit-text-stroke:0.35px;">17</div>
<div class="t" style="left:77px;top:577px;width:78px;text-align:center;font-size:14px;letter-spacing:-0.6px;-webkit-text-stroke:0.3px;">2025-12-17</div>
<div class="t" style="left:154px;top:576px;width:95px;text-align:center;font-size:15px;-webkit-text-stroke:0.25px;">单程</div>
<div class="t" style="left:249px;top:576px;width:95px;text-align:center;font-size:15px;-webkit-text-stroke:0.25px;">正班</div>
<div class="t" style="left:344px;top:576px;width:95px;text-align:center;font-size:15px;-webkit-text-stroke:0.25px;">准班</div>
<div class="t" style="left:439px;top:577px;width:54px;text-align:center;font-size:14px;letter-spacing:-0.6px;-webkit-text-stroke:0.3px;">0</div>
<div class="t" style="left:493px;top:577px;width:95px;text-align:center;font-size:14px;letter-spacing:-0.6px;-webkit-text-stroke:0.3px;">17</div>
<div class="t" style="left:588px;top:577px;width:140px;text-align:center;font-size:14px;letter-spacing:-0.6px;-webkit-text-stroke:0.3px;">1.5</div>
<div class="t" style="left:728px;top:577px;width:140px;text-align:center;font-size:14px;letter-spacing:-0.6px;-webkit-text-stroke:0.3px;">1.5</div>
<div class="t" style="left:901px;top:577px;font-size:14px;-webkit-text-stroke:0.3px;">0</div>
<div class="a" style="left:76px;top:593px;width:837px;height:20px;background:#ffeb00"></div>
<div class="a" style="left:23px;top:593px;width:53px;height:20px;background:#bdbdbd"></div>
<div class="t" style="left:23px;top:597px;width:54px;text-align:center;font-size:14px;letter-spacing:-0.5px;-webkit-text-stroke:0.35px;">18</div>
<div class="t" style="left:77px;top:597px;width:78px;text-align:center;font-size:14px;letter-spacing:-0.6px;-webkit-text-stroke:0.3px;">2025-12-18</div>
<div class="t" style="left:154px;top:596px;width:95px;text-align:center;font-size:15px;-webkit-text-stroke:0.25px;">单程</div>
<div class="t" style="left:249px;top:596px;width:95px;text-align:center;font-size:15px;-webkit-text-stroke:0.25px;">加班</div>
<div class="t" style="left:344px;top:596px;width:95px;text-align:center;font-size:15px;-webkit-text-stroke:0.25px;">准班</div>
<div class="t" style="left:439px;top:597px;width:54px;text-align:center;font-size:14px;letter-spacing:-0.6px;-webkit-text-stroke:0.3px;">0</div>
<div class="t" style="left:493px;top:597px;width:95px;text-align:center;font-size:14px;letter-spacing:-0.6px;-webkit-text-stroke:0.3px;">16</div>
<div class="t" style="left:588px;top:597px;width:140px;text-align:center;font-size:14px;letter-spacing:-0.6px;-webkit-text-stroke:0.3px;">1.5</div>
<div class="t" style="left:728px;top:597px;width:140px;text-align:center;font-size:14px;letter-spacing:-0.6px;-webkit-text-stroke:0.3px;">1.5</div>
<div class="t" style="left:901px;top:597px;font-size:14px;-webkit-text-stroke:0.3px;">0</div>
<div class="a" style="left:76px;top:613px;width:837px;height:20px;background:#ffeb00"></div>
<div class="a" style="left:23px;top:613px;width:53px;height:20px;background:#bdbdbd"></div>
<div class="t" style="left:23px;top:617px;width:54px;text-align:center;font-size:14px;letter-spacing:-0.5px;-webkit-text-stroke:0.35px;">19</div>
<div class="t" style="left:77px;top:617px;width:78px;text-align:center;font-size:14px;letter-spacing:-0.6px;-webkit-text-stroke:0.3px;">2025-12-19</div>
<div class="t" style="left:154px;top:616px;width:95px;text-align:center;font-size:15px;-webkit-text-stroke:0.25px;">单程</div>
<div class="t" style="left:249px;top:616px;width:95px;text-align:center;font-size:15px;-webkit-text-stroke:0.25px;">加班</div>
<div class="t" style="left:344px;top:616px;width:95px;text-align:center;font-size:15px;-webkit-text-stroke:0.25px;">准班</div>
<div class="t" style="left:439px;top:617px;width:54px;text-align:center;font-size:14px;letter-spacing:-0.6px;-webkit-text-stroke:0.3px;">0</div>
<div class="t" style="left:493px;top:617px;width:95px;text-align:center;font-size:14px;letter-spacing:-0.6px;-webkit-text-stroke:0.3px;">10</div>
<div class="t" style="left:588px;top:617px;width:140px;text-align:center;font-size:14px;letter-spacing:-0.6px;-webkit-text-stroke:0.3px;">2.75</div>
<div class="t" style="left:728px;top:617px;width:140px;text-align:center;font-size:14px;letter-spacing:-0.6px;-webkit-text-stroke:0.3px;">2.75</div>
<div class="t" style="left:901px;top:617px;font-size:14px;-webkit-text-stroke:0.3px;">0</div>
<div class="a" style="left:76px;top:633px;width:837px;height:20px;background:#ffeb00"></div>
<div class="a" style="left:23px;top:633px;width:53px;height:20px;background:#bdbdbd"></div>
<div class="t" style="left:23px;top:637px;width:54px;text-align:center;font-size:14px;letter-spacing:-0.5px;-webkit-text-stroke:0.35px;">20</div>
<div class="t" style="left:77px;top:637px;width:78px;text-align:center;font-size:14px;letter-spacing:-0.6px;-webkit-text-stroke:0.3px;">2025-12-20</div>
<div class="t" style="left:154px;top:636px;width:95px;text-align:center;font-size:15px;-webkit-text-stroke:0.25px;">单程</div>
<div class="t" style="left:249px;top:636px;width:95px;text-align:center;font-size:15px;-webkit-text-stroke:0.25px;">加班</div>
<div class="t" style="left:344px;top:636px;width:95px;text-align:center;font-size:15px;-webkit-text-stroke:0.25px;">准班</div>
<div class="t" style="left:439px;top:637px;width:54px;text-align:center;font-size:14px;letter-spacing:-0.6px;-webkit-text-stroke:0.3px;">0</div>
<div class="t" style="left:493px;top:637px;width:95px;text-align:center;font-size:14px;letter-spacing:-0.6px;-webkit-text-stroke:0.3px;">11</div>
<div class="t" style="left:588px;top:637px;width:140px;text-align:center;font-size:14px;letter-spacing:-0.6px;-webkit-text-stroke:0.3px;">1.5</div>
<div class="t" style="left:728px;top:637px;width:140px;text-align:center;font-size:14px;letter-spacing:-0.6px;-webkit-text-stroke:0.3px;">1.5</div>
<div class="t" style="left:901px;top:637px;font-size:14px;-webkit-text-stroke:0.3px;">0</div>
<div class="a" style="left:76px;top:653px;width:837px;height:20px;background:#ffeb00"></div>
<div class="a" style="left:23px;top:653px;width:53px;height:20px;background:#bdbdbd"></div>
<div class="t" style="left:23px;top:657px;width:54px;text-align:center;font-size:14px;letter-spacing:-0.5px;-webkit-text-stroke:0.35px;">21</div>
<div class="t" style="left:77px;top:657px;width:78px;text-align:center;font-size:14px;letter-spacing:-0.6px;-webkit-text-stroke:0.3px;">2025-12-21</div>
<div class="t" style="left:154px;top:656px;width:95px;text-align:center;font-size:15px;-webkit-text-stroke:0.25px;">单程</div>
<div class="t" style="left:249px;top:656px;width:95px;text-align:center;font-size:15px;-webkit-text-stroke:0.25px;">加班</div>
<div class="t" style="left:344px;top:656px;width:95px;text-align:center;font-size:15px;-webkit-text-stroke:0.25px;">准班</div>
<div class="t" style="left:439px;top:657px;width:54px;text-align:center;font-size:14px;letter-spacing:-0.6px;-webkit-text-stroke:0.3px;">0</div>
<div class="t" style="left:493px;top:657px;width:95px;text-align:center;font-size:14px;letter-spacing:-0.6px;-webkit-text-stroke:0.3px;">11</div>
<div class="t" style="left:588px;top:657px;width:140px;text-align:center;font-size:14px;letter-spacing:-0.6px;-webkit-text-stroke:0.3px;">2.7</div>
<div class="t" style="left:728px;top:657px;width:140px;text-align:center;font-size:14px;letter-spacing:-0.6px;-webkit-text-stroke:0.3px;">2.7</div>
<div class="t" style="left:901px;top:657px;font-size:14px;-webkit-text-stroke:0.3px;">0</div>
<div class="a" style="left:76px;top:673px;width:837px;height:20px;background:#ffeb00"></div>
<div class="a" style="left:23px;top:673px;width:53px;height:20px;background:#bdbdbd"></div>
<div class="t" style="left:23px;top:677px;width:54px;text-align:center;font-size:14px;letter-spacing:-0.5px;-webkit-text-stroke:0.35px;">22</div>
<div class="t" style="left:77px;top:677px;width:78px;text-align:center;font-size:14px;letter-spacing:-0.6px;-webkit-text-stroke:0.3px;">2025-12-22</div>
<div class="t" style="left:154px;top:676px;width:95px;text-align:center;font-size:15px;-webkit-text-stroke:0.25px;">单程</div>
<div class="t" style="left:249px;top:676px;width:95px;text-align:center;font-size:15px;-webkit-text-stroke:0.25px;">加班</div>
<div class="t" style="left:344px;top:676px;width:95px;text-align:center;font-size:15px;-webkit-text-stroke:0.25px;">准班</div>
<div class="t" style="left:439px;top:677px;width:54px;text-align:center;font-size:14px;letter-spacing:-0.6px;-webkit-text-stroke:0.3px;">0</div>
<div class="t" style="left:493px;top:677px;width:95px;text-align:center;font-size:14px;letter-spacing:-0.6px;-webkit-text-stroke:0.3px;">16</div>
<div class="t" style="left:588px;top:677px;width:140px;text-align:center;font-size:14px;letter-spacing:-0.6px;-webkit-text-stroke:0.3px;">2.75</div>
<div class="t" style="left:728px;top:677px;width:140px;text-align:center;font-size:14px;letter-spacing:-0.6px;-webkit-text-stroke:0.3px;">2.75</div>
<div class="t" style="left:901px;top:677px;font-size:14px;-webkit-text-stroke:0.3px;">0</div>
<div class="a" style="left:76px;top:693px;width:837px;height:20px;background:#ffeb00"></div>
<div class="a" style="left:23px;top:693px;width:53px;height:20px;background:#bdbdbd"></div>
<div class="t" style="left:23px;top:697px;width:54px;text-align:center;font-size:14px;letter-spacing:-0.5px;-webkit-text-stroke:0.35px;">23</div>
<div class="t" style="left:77px;top:697px;width:78px;text-align:center;font-size:14px;letter-spacing:-0.6px;-webkit-text-stroke:0.3px;">2025-12-23</div>
<div class="t" style="left:154px;top:696px;width:95px;text-align:center;font-size:15px;-webkit-text-stroke:0.25px;">单程</div>
<div class="t" style="left:249px;top:696px;width:95px;text-align:center;font-size:15px;-webkit-text-stroke:0.25px;">加班</div>
<div class="t" style="left:344px;top:696px;width:95px;text-align:center;font-size:15px;-webkit-text-stroke:0.25px;">准班</div>
<div class="t" style="left:439px;top:697px;width:54px;text-align:center;font-size:14px;letter-spacing:-0.6px;-webkit-text-stroke:0.3px;">0</div>
<div class="t" style="left:493px;top:697px;width:95px;text-align:center;font-size:14px;letter-spacing:-0.6px;-webkit-text-stroke:0.3px;">10</div>
<div class="t" style="left:588px;top:697px;width:140px;text-align:center;font-size:14px;letter-spacing:-0.6px;-webkit-text-stroke:0.3px;">2.75</div>
<div class="t" style="left:728px;top:697px;width:140px;text-align:center;font-size:14px;letter-spacing:-0.6px;-webkit-text-stroke:0.3px;">2.75</div>
<div class="t" style="left:901px;top:697px;font-size:14px;-webkit-text-stroke:0.3px;">0</div>
<div class="a" style="left:76px;top:713px;width:837px;height:20px;background:#ffeb00"></div>
<div class="a" style="left:23px;top:713px;width:53px;height:20px;background:#bdbdbd"></div>
<div class="t" style="left:23px;top:717px;width:54px;text-align:center;font-size:14px;letter-spacing:-0.5px;-webkit-text-stroke:0.35px;">24</div>
<div class="t" style="left:77px;top:717px;width:78px;text-align:center;font-size:14px;letter-spacing:-0.6px;-webkit-text-stroke:0.3px;">2025-12-24</div>
<div class="t" style="left:154px;top:716px;width:95px;text-align:center;font-size:15px;-webkit-text-stroke:0.25px;">去程</div>
<div class="t" style="left:249px;top:716px;width:95px;text-align:center;font-size:15px;-webkit-text-stroke:0.25px;">正班</div>
<div class="t" style="left:344px;top:716px;width:95px;text-align:center;font-size:15px;-webkit-text-stroke:0.25px;">准班</div>
<div class="t" style="left:439px;top:717px;width:54px;text-align:center;font-size:14px;letter-spacing:-0.6px;-webkit-text-stroke:0.3px;">0</div>
<div class="t" style="left:493px;top:717px;width:95px;text-align:center;font-size:14px;letter-spacing:-0.6px;-webkit-text-stroke:0.3px;">105</div>
<div class="t" style="left:588px;top:717px;width:140px;text-align:center;font-size:14px;letter-spacing:-0.6px;-webkit-text-stroke:0.3px;">1.5</div>
<div class="t" style="left:728px;top:717px;width:140px;text-align:center;font-size:14px;letter-spacing:-0.6px;-webkit-text-stroke:0.3px;">0</div>
<div class="t" style="left:901px;top:717px;font-size:14px;-webkit-text-stroke:0.3px;">0</div>
<div class="a" style="left:76px;top:733px;width:837px;height:20px;background:#ffeb00"></div>
<div class="a" style="left:23px;top:733px;width:53px;height:20px;background:#bdbdbd"></div>
<div class="t" style="left:23px;top:737px;width:54px;text-align:center;font-size:14px;letter-spacing:-0.5px;-webkit-text-stroke:0.35px;">25</div>
<div class="t" style="left:77px;top:737px;width:78px;text-align:center;font-size:14px;letter-spacing:-0.6px;-webkit-text-stroke:0.3px;">2025-12-25</div>
<div class="t" style="left:154px;top:736px;width:95px;text-align:center;font-size:15px;-webkit-text-stroke:0.25px;">去程</div>
<div class="t" style="left:249px;top:736px;width:95px;text-align:center;font-size:15px;-webkit-text-stroke:0.25px;">正班</div>
<div class="t" style="left:344px;top:736px;width:95px;text-align:center;font-size:15px;-webkit-text-stroke:0.25px;">准班</div>
<div class="t" style="left:439px;top:737px;width:54px;text-align:center;font-size:14px;letter-spacing:-0.6px;-webkit-text-stroke:0.3px;">0</div>
<div class="t" style="left:493px;top:737px;width:95px;text-align:center;font-size:14px;letter-spacing:-0.6px;-webkit-text-stroke:0.3px;">142</div>
<div class="t" style="left:588px;top:737px;width:140px;text-align:center;font-size:14px;letter-spacing:-0.6px;-webkit-text-stroke:0.3px;">2.75</div>
<div class="t" style="left:728px;top:737px;width:140px;text-align:center;font-size:14px;letter-spacing:-0.6px;-webkit-text-stroke:0.3px;">0</div>
<div class="t" style="left:901px;top:737px;font-size:14px;-webkit-text-stroke:0.3px;">0</div>
<div class="a" style="left:0;top:189px;width:22px;height:559px;background:#e6e6e6"></div>
<div class="a" style="left:22px;top:170px;width:1px;height:578px;background:#a9a9a9"></div>
<div class="a" style="left:0;top:219px;width:22px;height:1px;background:#c6c6c6"></div>
<div class="t" style="left:0;top:203px;width:17px;text-align:center;font-size:15px">1</div>
<div class="a" style="left:0;top:252px;width:22px;height:1px;background:#c6c6c6"></div>
<div class="t" style="left:0;top:236px;width:17px;text-align:center;font-size:15px">2</div>
<div class="a" style="left:0;top:272px;width:22px;height:1px;background:#c6c6c6"></div>
<div class="t" style="left:0;top:256px;width:17px;text-align:center;font-size:15px">3</div>
<div class="a" style="left:0;top:292px;width:22px;height:1px;background:#c6c6c6"></div>
<div class="t" style="left:0;top:276px;width:17px;text-align:center;font-size:15px">4</div>
<div class="a" style="left:0;top:312px;width:22px;height:1px;background:#c6c6c6"></div>
<div class="t" style="left:0;top:296px;width:17px;text-align:center;font-size:15px">5</div>
<div class="a" style="left:0;top:332px;width:22px;height:1px;background:#c6c6c6"></div>
<div class="t" style="left:0;top:316px;width:17px;text-align:center;font-size:15px">6</div>
<div class="a" style="left:0;top:352px;width:22px;height:1px;background:#c6c6c6"></div>
<div class="t" style="left:0;top:336px;width:17px;text-align:center;font-size:15px">7</div>
<div class="a" style="left:0;top:372px;width:22px;height:1px;background:#c6c6c6"></div>
<div class="t" style="left:0;top:356px;width:17px;text-align:center;font-size:15px">8</div>
<div class="a" style="left:0;top:392px;width:22px;height:1px;background:#c6c6c6"></div>
<div class="t" style="left:0;top:376px;width:17px;text-align:center;font-size:15px">9</div>
<div class="a" style="left:0;top:412px;width:22px;height:1px;background:#c6c6c6"></div>
<div class="t" style="left:0;top:396px;width:17px;text-align:center;font-size:15px">10</div>
<div class="a" style="left:0;top:432px;width:22px;height:1px;background:#c6c6c6"></div>
<div class="t" style="left:0;top:416px;width:17px;text-align:center;font-size:15px">11</div>
<div class="a" style="left:0;top:452px;width:22px;height:1px;background:#c6c6c6"></div>
<div class="t" style="left:0;top:436px;width:17px;text-align:center;font-size:15px">12</div>
<div class="a" style="left:0;top:472px;width:22px;height:1px;background:#c6c6c6"></div>
<div class="t" style="left:0;top:456px;width:17px;text-align:center;font-size:15px">13</div>
<div class="a" style="left:0;top:492px;width:22px;height:1px;background:#c6c6c6"></div>
<div class="t" style="left:0;top:476px;width:17px;text-align:center;font-size:15px">14</div>
<div class="a" style="left:0;top:512px;width:22px;height:1px;background:#c6c6c6"></div>
<div class="t" style="left:0;top:496px;width:17px;text-align:center;font-size:15px">15</div>
<div class="a" style="left:0;top:532px;width:22px;height:1px;background:#c6c6c6"></div>
<div class="t" style="left:0;top:516px;width:17px;text-align:center;font-size:15px">16</div>
<div class="a" style="left:0;top:552px;width:22px;height:1px;background:#c6c6c6"></div>
<div class="t" style="left:0;top:536px;width:17px;text-align:center;font-size:15px">17</div>
<div class="a" style="left:0;top:572px;width:22px;height:1px;background:#c6c6c6"></div>
<div class="t" style="left:0;top:556px;width:17px;text-align:center;font-size:15px">18</div>
<div class="a" style="left:0;top:592px;width:22px;height:1px;background:#c6c6c6"></div>
<div class="t" style="left:0;top:576px;width:17px;text-align:center;font-size:15px">19</div>
<div class="a" style="left:0;top:612px;width:22px;height:1px;background:#c6c6c6"></div>
<div class="t" style="left:0;top:596px;width:17px;text-align:center;font-size:15px">20</div>
<div class="a" style="left:0;top:632px;width:22px;height:1px;background:#c6c6c6"></div>
<div class="t" style="left:0;top:616px;width:17px;text-align:center;font-size:15px">21</div>
<div class="a" style="left:0;top:652px;width:22px;height:1px;background:#c6c6c6"></div>
<div class="t" style="left:0;top:636px;width:17px;text-align:center;font-size:15px">22</div>
<div class="a" style="left:0;top:672px;width:22px;height:1px;background:#c6c6c6"></div>
<div class="t" style="left:0;top:656px;width:17px;text-align:center;font-size:15px">23</div>
<div class="a" style="left:0;top:692px;width:22px;height:1px;background:#c6c6c6"></div>
<div class="t" style="left:0;top:676px;width:17px;text-align:center;font-size:15px">24</div>
<div class="a" style="left:0;top:712px;width:22px;height:1px;background:#c6c6c6"></div>
<div class="t" style="left:0;top:696px;width:17px;text-align:center;font-size:15px">25</div>
<div class="a" style="left:0;top:732px;width:22px;height:1px;background:#c6c6c6"></div>
<div class="t" style="left:0;top:716px;width:17px;text-align:center;font-size:15px">26</div>
<div class="a" style="left:0;top:752px;width:22px;height:1px;background:#c6c6c6"></div>
<div class="t" style="left:0;top:736px;width:17px;text-align:center;font-size:15px">27</div>
<div class="a" style="left:0;top:772px;width:22px;height:1px;background:#c6c6c6"></div>
<div class="t" style="left:0;top:756px;width:17px;text-align:center;font-size:15px">28</div>
<div class="a" style="left:0;top:747px;width:914px;height:1px;background:#1f4a30"></div>
<svg class="a" style="left:246px;top:237px" width="13" height="21"><path d="M0.5 0.5V16.5L4.5 12.5L7.5 19.5L9.5 18.5L6.5 11.5H11.5Z" fill="#fff" stroke="#1d3b28"/></svg>
</body></html>
